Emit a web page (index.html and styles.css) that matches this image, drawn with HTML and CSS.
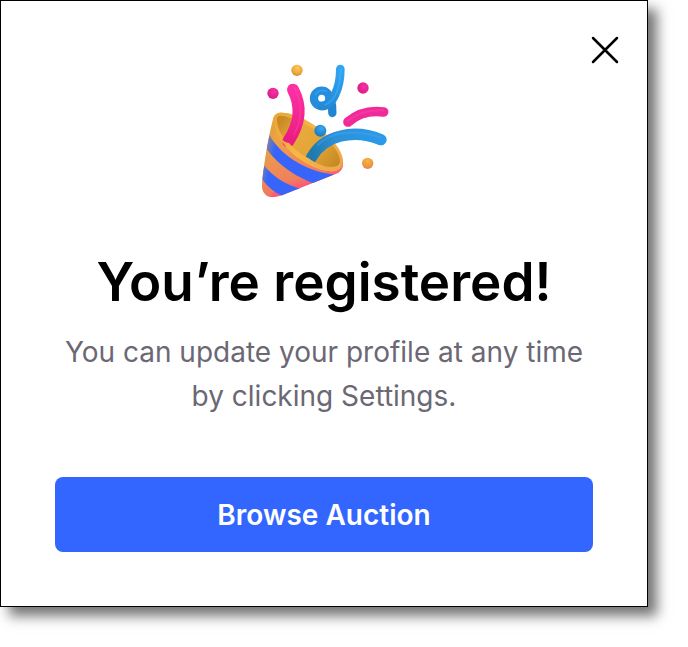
FILE: index.html
```html
<!DOCTYPE html>
<html lang="en">
<head>
<meta charset="utf-8">
<meta name="viewport" content="width=device-width, initial-scale=1">
<title>You’re registered!</title>
<link rel="stylesheet" href="styles.css">
</head>
<body>
<main class="dialog" role="dialog" aria-labelledby="title">
  <button class="close" type="button" aria-label="Close">
    <svg viewBox="0 0 28 28" width="28" height="28" aria-hidden="true"><path d="M2 2 26 26M26 2 2 26"/></svg>
  </button>
  <svg class="popper" viewBox="2 0 444 450" aria-hidden="true">
    <defs>
      <linearGradient id="cone" x1="80" y1="190" x2="170" y2="420" gradientUnits="userSpaceOnUse">
        <stop offset="0" stop-color="#f0ac3c"/><stop offset=".45" stop-color="#ee9550"/><stop offset=".8" stop-color="#f07c60"/><stop offset="1" stop-color="#fb5578"/>
      </linearGradient>
      <linearGradient id="edge" x1="145" y1="300" x2="170" y2="400" gradientUnits="userSpaceOnUse">
        <stop offset=".65" stop-color="#ff4a80" stop-opacity="0"/><stop offset="1" stop-color="#ff4a80" stop-opacity=".7"/>
      </linearGradient>
      <linearGradient id="side" x1="38" y1="300" x2="70" y2="308" gradientUnits="userSpaceOnUse">
        <stop offset="0" stop-color="#d49a3c" stop-opacity=".6"/><stop offset="1" stop-color="#d49a3c" stop-opacity="0"/>
      </linearGradient>
      <linearGradient id="inside" x1="100" y1="190" x2="265" y2="325" gradientUnits="userSpaceOnUse">
        <stop offset="0" stop-color="#c98a26"/><stop offset=".3" stop-color="#e9aa3c"/><stop offset=".65" stop-color="#e2a436"/><stop offset="1" stop-color="#c68a24"/>
      </linearGradient>
      <linearGradient id="rim" x1="80" y1="180" x2="270" y2="345" gradientUnits="userSpaceOnUse">
        <stop offset="0" stop-color="#e9a737"/><stop offset=".5" stop-color="#f8b746"/><stop offset="1" stop-color="#efa64c"/>
      </linearGradient>
      <linearGradient id="ribbon" x1="190" y1="300" x2="410" y2="240" gradientUnits="userSpaceOnUse">
        <stop offset="0" stop-color="#217aae"/><stop offset=".35" stop-color="#2b91da"/><stop offset="1" stop-color="#2a9bea"/>
      </linearGradient>
      <linearGradient id="curl" x1="230" y1="180" x2="275" y2="30" gradientUnits="userSpaceOnUse">
        <stop offset="0" stop-color="#2385ce"/><stop offset=".5" stop-color="#2996e5"/><stop offset="1" stop-color="#31a7f5"/>
      </linearGradient>
      <linearGradient id="pink" x1="0" y1="0" x2="0" y2="1">
        <stop offset="0" stop-color="#fc30a4"/><stop offset="1" stop-color="#eb1c7f"/>
      </linearGradient>
      <radialGradient id="gold" cx=".55" cy=".3" r=".7"><stop offset="0" stop-color="#ffc957"/><stop offset=".6" stop-color="#edad3e"/><stop offset="1" stop-color="#d58b35"/></radialGradient>
      <radialGradient id="amber" cx=".5" cy=".25" r=".8"><stop offset="0" stop-color="#f6b640"/><stop offset=".6" stop-color="#e99a3f"/><stop offset="1" stop-color="#ef7960"/></radialGradient>
      <radialGradient id="rose" cx=".6" cy=".35" r=".7"><stop offset="0" stop-color="#fa30a5"/><stop offset="1" stop-color="#d91c83"/></radialGradient>
      <radialGradient id="blue" cx=".6" cy=".3" r=".7"><stop offset="0" stop-color="#38a8ef"/><stop offset="1" stop-color="#1b78c0"/></radialGradient>
      <filter id="soft" x="-20%" y="-20%" width="140%" height="140%"><feGaussianBlur stdDeviation="2"/></filter>
      <clipPath id="coneClip"><path d="M72 190C61 230 45 315 38 388C36 413 52 430 78 426C92 424 102 420 115 414L264 355C290 340 282 312 272 292C240 230 150 173 98 173C82 173 76 179 72 190Z"/></clipPath>
    </defs>
    <g clip-path="url(#coneClip)">
      <path fill="url(#cone)" d="M30 160H300V440H30Z"/>
      <path fill="url(#edge)" d="M60 430 290 350V300L100 370Z"/>
      <path fill="#3765fb" d="M60 240C90 294 160 348 256 359L202 388C145 369 90 335 50 280Z"/>
      <path fill="#3765fb" d="M45 332C71 364 112 393 158 401L105 424C80 416 55 398 34 366Z"/>
      <path fill="url(#side)" d="M30 180H100L75 430H30Z"/>
    </g>
    <path fill="url(#rim)" d="M72 190C77 176 88 172 101 173C153 178 237 229 267 279C287 311 286 339 259 347C217 357 142 316 106 270C81 237 69 207 72 190Z"/>
    <path fill="url(#inside)" d="M83 190C84 181 94 181 106 184C163 198 232 239 260 285C277 312 276 330 257 337C220 345 151 306 119 270C93 240 82 213 83 190Z"/>
    <path d="M131 104C155 149 157 199 117 259" fill="none" stroke="url(#pink)" stroke-width="36" stroke-linecap="round"/>
    <path d="M136 99C160 149 159 196 134 238" fill="none" stroke="#ff52b0" stroke-opacity=".3" stroke-width="5" stroke-linecap="round" filter="url(#soft)"/>
    <path d="M187 307C223 242 311 220 395 254" fill="none" stroke="url(#ribbon)" stroke-width="34" stroke-linecap="round"/>
    <path d="M205 270C244 232 310 220 394 247" fill="none" stroke="#50a9f5" stroke-opacity=".35" stroke-width="6" stroke-linecap="round" filter="url(#soft)"/>
    <path fill="url(#rim)" d="M75 224C83 246 101 260 119 264C139 287 159 301 177 309C214 336 248 342 269 330L277 327C275 341 269 345 259 347C217 357 142 316 106 270C91 250 81 236 75 224Z"/>
    <path d="M249 174Q250 150 243 130" fill="none" stroke="#2385d2" stroke-width="25" stroke-linecap="round"/>
    <circle cx="217" cy="130" r="23" fill="none" stroke="#258ddb" stroke-width="25"/>
    <path d="M217 153C250 154 273 98 273 42" fill="none" stroke="url(#curl)" stroke-width="26" stroke-linecap="round"/>
    <path d="M199 118C204 107 220 103 231 109M228 149C261 137 271 94 275 43" fill="none" stroke="#58b9ff" stroke-opacity=".35" stroke-width="5" stroke-linecap="round" filter="url(#soft)"/>
    <path d="M296 201C328 173 364 166 403 171" fill="none" stroke="#f02a98" stroke-width="29" stroke-linecap="round"/>
    <path d="M294 198C327 171 364 163 402 166" fill="none" stroke="#ff4eac" stroke-opacity=".35" stroke-width="6" stroke-linecap="round" filter="url(#soft)"/>
    <circle cx="143" cy="46" r="17" fill="url(#gold)"/>
    <circle cx="71" cy="115" r="17" fill="url(#rose)"/>
    <circle cx="341" cy="99" r="17" fill="url(#rose)"/>
    <circle cx="213" cy="227" r="18" fill="url(#blue)"/>
    <circle cx="355" cy="325" r="17" fill="url(#amber)"/>
  </svg>
  <h1 class="title" id="title">You’re registered!</h1>
  <p class="message">You can update your profile at any time by clicking Settings.</p>
  <button class="action" type="button">Browse Auction</button>
</main>
</body>
</html>
```
FILE: styles.css
```css
* {
  box-sizing: border-box;
}

body {
  margin: 0;
  padding: 0 40px 40px 0;
  background: #fff;
  font-family: Inter, "Liberation Sans", sans-serif;
}

.dialog {
  position: relative;
  display: flex;
  flex-direction: column;
  align-items: center;
  padding: 54px;
  border: 1px solid #000;
  background: #fff;
  box-shadow: 9px 9px 12px #747474;
  text-align: center;
}

.close {
  position: absolute;
  top: 35px;
  right: 28px;
  display: flex;
  padding: 0;
  border: 0;
  background: none;
  cursor: pointer;
}

.close path {
  fill: none;
  stroke: #000;
  stroke-width: 2.5;
  stroke-linecap: round;
}

.popper {
  width: 148px;
  height: 150px;
}

.title {
  margin: 41px 0 12px;
  color: #000;
  font-size: 53px;
  font-weight: 600;
  line-height: 72px;
}

.message {
  max-width: 538px;
  margin: 0 0 59px;
  color: #6b6874;
  font-size: 28px;
  line-height: 44px;
}

.action {
  width: 100%;
  height: 75px;
  border: 0;
  border-radius: 8px;
  background: #3366ff;
  color: #fff;
  font: 600 28px/40px Inter, "Liberation Sans", sans-serif;
  cursor: pointer;
}
```
